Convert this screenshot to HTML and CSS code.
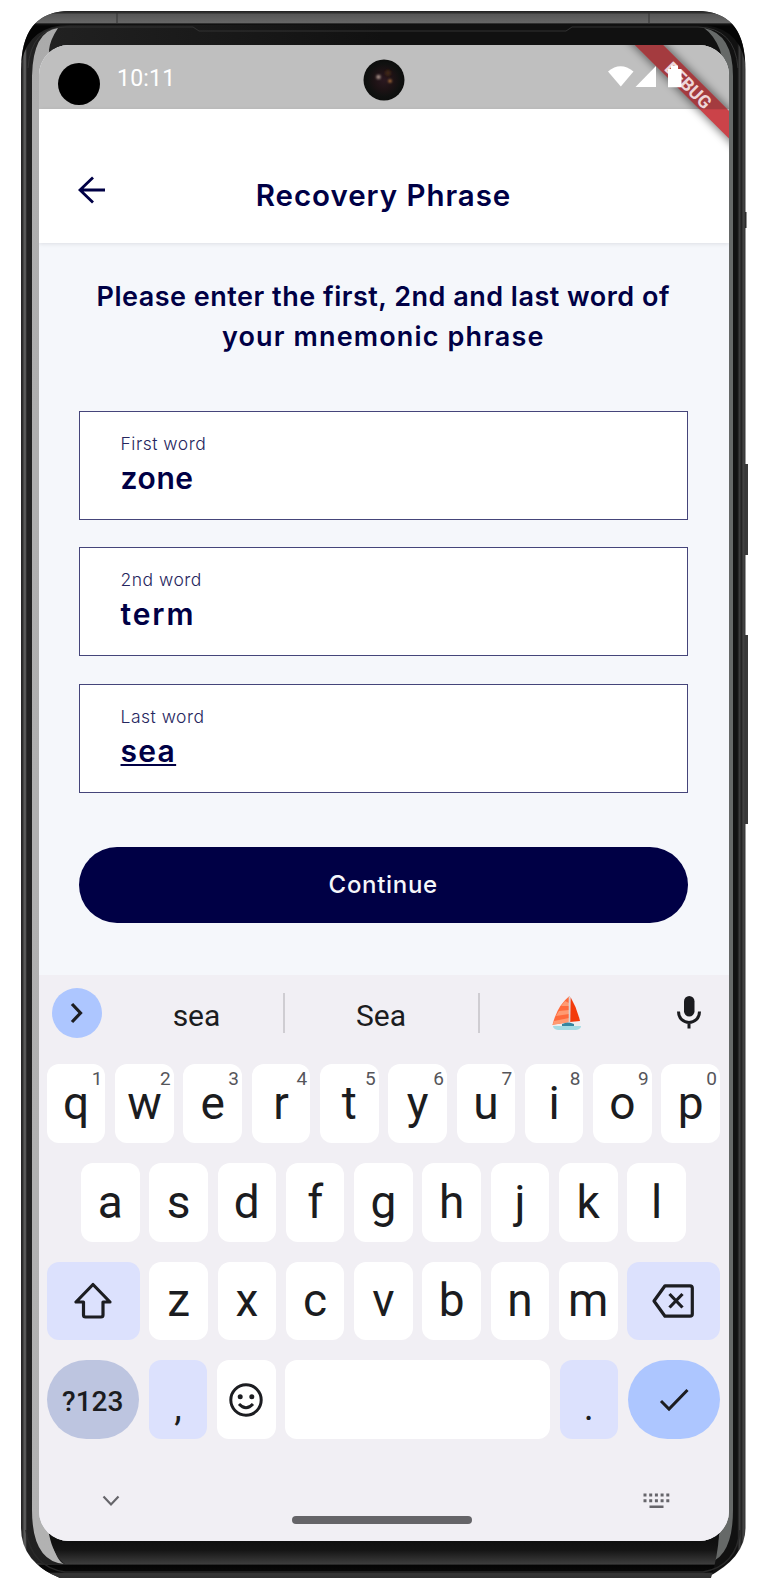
FILE: index.html
```html
<!DOCTYPE html>
<html lang="en">
<head>
<meta charset="utf-8">
<title>Recovery Phrase</title>
<link rel="stylesheet" href="styles.css">
</head>
<body>
<div class="phone">
  <svg class="frame" viewBox="0 0 758 1590" width="758" height="1590" aria-hidden="true">
    <defs>
      <linearGradient id="side" x1="21" x2="746" y1="0" y2="0" gradientUnits="userSpaceOnUse">
        <stop offset="0" stop-color="#222"/><stop offset=".003" stop-color="#333"/><stop offset=".004" stop-color="#5c5d5c"/>
        <stop offset=".0065" stop-color="#555"/><stop offset=".008" stop-color="#222"/><stop offset=".5" stop-color="#111"/>
        <stop offset=".988" stop-color="#111"/><stop offset=".991" stop-color="#3c3c3c"/><stop offset=".994" stop-color="#222"/><stop offset=".996" stop-color="#444"/><stop offset="1" stop-color="#333"/>
      </linearGradient>
      <linearGradient id="rim" x1="0" x2="0" y1="11" y2="26" gradientUnits="userSpaceOnUse">
        <stop offset="0" stop-color="#1d1d1d"/><stop offset=".13" stop-color="#333"/><stop offset=".22" stop-color="#565656"/><stop offset=".78" stop-color="#666"/><stop offset=".86" stop-color="#151515"/><stop offset="1" stop-color="#050505"/>
      </linearGradient>
      <linearGradient id="chin" x1="0" x2="0" y1="1541" y2="1578" gradientUnits="userSpaceOnUse">
        <stop offset="0" stop-color="#101010"/><stop offset=".25" stop-color="#151515"/><stop offset=".62" stop-color="#3d3d3d"/><stop offset=".66" stop-color="#050505"/><stop offset=".84" stop-color="#090909"/><stop offset=".88" stop-color="#353535"/><stop offset="1" stop-color="#303030"/>
      </linearGradient>
      <linearGradient id="edge" x1="0" x2="0" y1="28" y2="1565" gradientUnits="userSpaceOnUse">
        <stop offset="0" stop-color="#aaa"/><stop offset=".05" stop-color="#aeaeae"/><stop offset="1" stop-color="#b2b2b2"/>
      </linearGradient>
    </defs>
    <rect x="744" y="212" width="2.5" height="16" fill="#222"/>
    <rect x="744" y="464" width="4" height="91" fill="#3a3a3a"/>
    <rect x="744" y="635" width="4" height="189" fill="#3a3a3a"/>
    <path d="M21 70Q21 11 70 11H697Q745.500 11 745.500 70V1528Q745.500 1558 706 1578H60Q21 1562 21 1528Z" fill="url(#side)"/>
    <path d="M21.500 62Q24 11 70 11H697Q743 11 745 62Q738 25 697 25H70Q29 25 21.500 62Z" fill="url(#rim)"/>
    <path d="M117 13V24M649 13V24" stroke="#333" stroke-width="1"/>
    <path d="M28 68Q31 27 66 27H193L199 31H566L572 27H698Q735 28 738 68" fill="none" stroke="#333" stroke-width="1"/>
    <path d="M32 76Q33 31 58 28Q50 40 49 50L55 90H40V1500L51 1535Q55 1560 64 1564Q32 1561 32 1510Z" fill="url(#edge)"/>
    <path d="M704 28Q733 34 733 76V1510Q733 1560 704 1564Q716 1556 719 1535L728 1500V80L720 50Q714 35 704 28Z" fill="#666968"/>
    <path d="M49 1534H719Q718 1556 711 1578H60Q43 1571 36 1563Q53 1566 65 1564Q53 1555 49 1534Z" fill="url(#chin)"/>
    <path d="M26 1530Q31 1567 65 1572H703Q737 1566 740 1530" fill="none" stroke="#292929" stroke-width="1.500"/>
  </svg>

  <main class="screen">
    <header class="status">
      <time class="clock">10:11</time>
    </header>

    <div class="appbar">
      <svg class="back" viewBox="0 0 28 28" width="28" height="28" fill="none" stroke="#000045" stroke-width="2.800"><path d="M27 14H2M15 1.500L2 14L15 26.500"/></svg>
      <h1 class="title">Recovery Phrase</h1>
    </div>

    <section class="content">
      <h2 class="prompt"><span class="line-one">Please enter the first, 2nd and last word of</span><br><span class="line-two">your mnemonic phrase</span></h2>
      <div class="fields">
        <div class="field"><span class="label">First word</span><span class="value">zone</span></div>
        <div class="field"><span class="label">2nd word</span><span class="value loose">term</span></div>
        <div class="field"><span class="label">Last word</span><span class="value composing">sea</span></div>
      </div>
      <button class="continue">Continue</button>
    </section>

    <section class="keyboard">
      <div class="suggestions">
        <span class="expand"><svg viewBox="0 0 16 22" width="16" height="22" fill="none" stroke="#1c1d21" stroke-width="3.200"><path d="M3 2L11.500 11L3 20"/></svg></span>
        <span class="suggestion">sea</span>
        <span class="suggestion">Sea</span>
        <span class="suggestion">
          <svg viewBox="0 0 30 34" width="30" height="34">
            <path d="M17.500 0Q5 10 .5 29L17 26Z" fill="#ff6a3c"/>
            <path d="M13 5L17 7V10L9 10ZM7 15L17 14V18L4 20ZM2 25L17 22V26L.5 29Z" fill="#ff9a72"/>
            <path d="M18.500 1Q25 12 28 25L18 26Z" fill="#f33b0b"/>
            <path d="M17.500 1V27" stroke="#d9d4d4" stroke-width="1.600"/>
            <path d="M1 29L29 26L27 31H4Z" fill="#eceeee"/>
            <path d="M10 28Q16 25 22 28V30H10Z" fill="#3486a0"/>
            <path d="M1 30H29Q29 33 24 34H6Q1 33 1 30Z" fill="#a5dbe4"/>
          </svg>
        </span>
        <svg class="mic" viewBox="0 0 24 33" width="24" height="33"><rect x="7" y="0" width="10.500" height="20.500" rx="5.250" fill="#1b1b1f"/><path d="M1.500 15.500C1.500 30 22.500 30 22.500 15.500M12 26V32.500" fill="none" stroke="#1b1b1f" stroke-width="3"/></svg>
      </div>

      <div class="keys">
        <div class="row">
          <span class="key">q<sup>1</sup></span><span class="key">w<sup>2</sup></span><span class="key">e<sup>3</sup></span><span class="key">r<sup>4</sup></span><span class="key">t<sup>5</sup></span><span class="key">y<sup>6</sup></span><span class="key">u<sup>7</sup></span><span class="key">i<sup>8</sup></span><span class="key">o<sup>9</sup></span><span class="key">p<sup>0</sup></span>
        </div>
        <div class="row">
          <span class="key">a</span><span class="key">s</span><span class="key">d</span><span class="key">f</span><span class="key">g</span><span class="key">h</span><span class="key">j</span><span class="key">k</span><span class="key">l</span>
        </div>
        <div class="row">
          <span class="key wide tint"><svg viewBox="0 0 38 37" width="38" height="37" fill="none" stroke="#1c1d21" stroke-width="3.200" stroke-linejoin="round"><path d="M19 2.500L2 20H9.500V33Q9.500 35 11.500 35H27Q29 35 29 33V20H36Z"/></svg></span>
          <span class="key">z</span><span class="key">x</span><span class="key">c</span><span class="key">v</span><span class="key">b</span><span class="key">n</span><span class="key">m</span>
          <span class="key wide tint"><svg viewBox="0 0 42 34" width="42" height="34" fill="none" stroke="#1c1d21" stroke-width="3.200" stroke-linejoin="round"><path d="M13 1.800H38Q40.300 1.800 40.300 4V30Q40.300 32.200 38 32.200H13L2 17Z"/><path d="M17.500 10L30.500 23.500M30.500 10L17.500 23.500"/></svg></span>
        </div>
        <div class="row">
          <span class="key wide symbols">?123</span>
          <span class="key tint punct">,</span>
          <span class="key"><svg viewBox="0 0 34 34" width="34" height="34" fill="none" stroke="#1c1d21" stroke-width="3"><circle cx="17" cy="17" r="15.200"/><circle cx="11.200" cy="13.800" r="2.500" fill="#1c1d21" stroke="none"/><circle cx="22.800" cy="13.800" r="2.500" fill="#1c1d21" stroke="none"/><path d="M10 21Q17 28.500 24 21"/></svg></span>
          <span class="key space"></span>
          <span class="key tint punct">.</span>
          <span class="key wide enter"><svg viewBox="0 0 30 24" width="30" height="24" fill="none" stroke="#1c1d21" stroke-width="3"><path d="M2 13L10 21L28.500 2"/></svg></span>
        </div>
      </div>

      <footer class="nav">
        <svg class="collapse" viewBox="0 0 18 12" width="18" height="12" fill="none" stroke="#66656a" stroke-width="2.200"><path d="M1.500 1.500L9 9.500L16.500 1.500"/></svg>
        <span class="home"></span>
        <svg viewBox="0 0 27 16" width="27" height="16" fill="none" stroke="#66656a"><path d="M.5 2H27M.5 7.800H27" stroke-width="3" stroke-dasharray="3 2.700"/><path d="M6.500 13.700H20.500" stroke-width="2.600"/></svg>
      </footer>
    </section>

    <svg class="banner" viewBox="0 0 140 140" width="140" height="140">
      <defs><filter id="shade" x="-30%" y="-30%" width="160%" height="160%"><feGaussianBlur stdDeviation="4.500"/></filter>
      <clipPath id="bar"><rect width="140" height="64.300"/></clipPath></defs>
      <path d="M24 -20H56L170 94V126Z" fill="#000" opacity=".5" filter="url(#shade)"/>
      <path d="M46 0H74L140 66V93.500Z" fill="#cb4349"/>
      <path d="M46 0H74L140 66V93.500Z" fill="#a43b3f" clip-path="url(#bar)"/>
      <text class="banner-text" transform="translate(99 40.500) rotate(45)" text-anchor="middle" y="6">DEBUG</text>
      <g fill="#fff"><path d="M19 26.500Q31.500 16 44.500 26.500L31.800 41.500Z"/><path d="M67 21V42H46.500Z"/><path d="M79 24H82V20.500H89V24H92.500V42.300H79Z"/></g>
    </svg>
  </main>
  <span class="punch"></span>
  <svg class="lens" viewBox="0 0 42 42" width="42" height="42">
    <defs><radialGradient id="glass"><stop offset="0" stop-color="#2b1820"/><stop offset=".5" stop-color="#1c1214"/><stop offset=".8" stop-color="#101110"/><stop offset="1" stop-color="#0d0e0d"/></radialGradient>
    <filter id="glow"><feGaussianBlur stdDeviation=".8"/></filter></defs>
    <circle cx="21" cy="21" r="20.500" fill="url(#glass)"/>
    <g filter="url(#glow)"><circle cx="15.500" cy="18" r="2.300" fill="#a08a82"/><circle cx="27" cy="22" r="1.800" fill="#b0743a"/><circle cx="25" cy="14" r="3" fill="#3d2516"/></g>
  </svg>
</div>
</body>
</html>
```
FILE: styles.css
```css
* { box-sizing: border-box; }
body { margin: 0; background: #fff; }
.phone {
  position: relative;
  width: 758px;
  height: 1590px;
  padding: 45px 29px 49px 39px;
  overflow: hidden;
}
.frame { position: absolute; left: 0; top: 0; }
.screen {
  position: relative;
  display: flex;
  flex-direction: column;
  width: 690px;
  height: 1496px;
  border-radius: 30px;
  overflow: hidden;
  background: #f5f7fb;
  color: #000045;
  font-family: Inter, "Liberation Sans", sans-serif;
}
.status { height: 64px; padding: 20px 0 0 78px; background: #bfbfbf; }
.clock { display: block; font: 23px/28px Roboto, sans-serif; color: #fff; letter-spacing: .2px; }
.appbar {
  display: grid;
  grid-template-columns: 28px 1fr 28px;
  height: 134px;
  padding: 67px 40px 0 39px;
  background: #fff;
  box-shadow: 0 1px 4px rgba(0, 0, 30, .1);
}
.title { margin: 2px 0 0; font-size: 29.500px; line-height: 34px; font-weight: 600; text-align: center; white-space: nowrap; letter-spacing: .95px; }
.content { display: flex; flex-direction: column; height: 732px; padding: 34px 41px 0 39.500px; }
.prompt { margin: 0; text-align: center; font-size: 27px; line-height: 40.400px; font-weight: 600; white-space: nowrap; letter-spacing: .5px; }
.line-two { letter-spacing: 1.150px; }
.fields { display: grid; gap: 27.600px; margin-top: 53px; }
.field { display: flex; flex-direction: column; height: 109px; padding: 20px 0 0 41px; border: 1.500px solid #45457a; background: #fff; }
.label { font-size: 17.500px; line-height: 24px; font-weight: 300; color: #26265e; letter-spacing: .5px; }
.value { align-self: flex-start; margin-top: 4px; font-size: 30px; line-height: 36px; font-weight: 600; letter-spacing: .6px; }
.loose { letter-spacing: 1.900px; }
.composing { letter-spacing: 1.300px; text-decoration: underline 2px; text-underline-offset: 2px; text-decoration-skip-ink: none; }
.continue { height: 76px; margin-top: 54px; padding: 0 0 2px; border: 0; border-radius: 38px; background: #000045; color: #f5f6fa; font: 500 24px Inter, sans-serif; letter-spacing: .700px; }
.keyboard { height: 566px; background: #f1eff4; color: #1b1c20; font-family: Roboto, sans-serif; }
.suggestions { display: grid; grid-template-columns: 51px 182px 195px 177px 1fr; height: 89px; padding: 13px 12.500px 0; }
.expand { display: grid; place-items: center; width: 50px; height: 50px; border-radius: 50%; background: #adc6ff; }
.suggestion { display: grid; place-items: center; height: 40px; margin-top: 5px; padding-top: 6px; font-size: 30px; line-height: 34px; }
.suggestion:nth-child(2), .suggestion:nth-child(3) { border-right: 2px solid #cfcdd2; }
.suggestion:nth-child(2) { padding-left: 8px; }
.suggestion:nth-child(4) { height: 44px; margin-top: 3px; padding: 0 2px 0 0; }
.mic { justify-self: start; margin: 8px 0 0 20px; }
.keys { display: grid; gap: 20px; padding: 0 9px 0 7.500px; }
.row { display: flex; justify-content: center; gap: 9.700px; height: 78.800px; }
.key { position: relative; display: grid; place-items: center; width: 58.600px; border-radius: 12px; background: #fff; font-size: 46px; line-height: 77px; }
.key sup { position: absolute; top: 3px; right: 3px; font-size: 19px; line-height: 24px; color: #55555a; }
.wide { width: 92.500px; }
.tint { background: #dce1fd; }
.symbols { padding-top: 3px; border-radius: 40px; background: #bdc5e0; font-size: 28px; font-weight: 500; }
.punct { padding-top: 9px; font-size: 38px; }
.space { width: 264.600px; }
.enter { border-radius: 40px; background: #adc6ff; }
.nav { display: grid; grid-template-columns: 18px 181px 27px; justify-content: space-between; padding: 54px 59px 0 63px; }
.collapse { margin-top: 2px; }
.home { height: 7.500px; margin: 23px 0 0 1px; border-radius: 4px; background: #656468; }
.banner { position: absolute; top: 0; right: 0; }
.banner-text { font: 700 18px Roboto, sans-serif; fill: #eed6d8; }
.punch { position: absolute; left: 57.500px; top: 62.500px; width: 42px; height: 42px; border-radius: 50%; background: #000; }
.lens { position: absolute; left: 363px; top: 58.500px; }
```
